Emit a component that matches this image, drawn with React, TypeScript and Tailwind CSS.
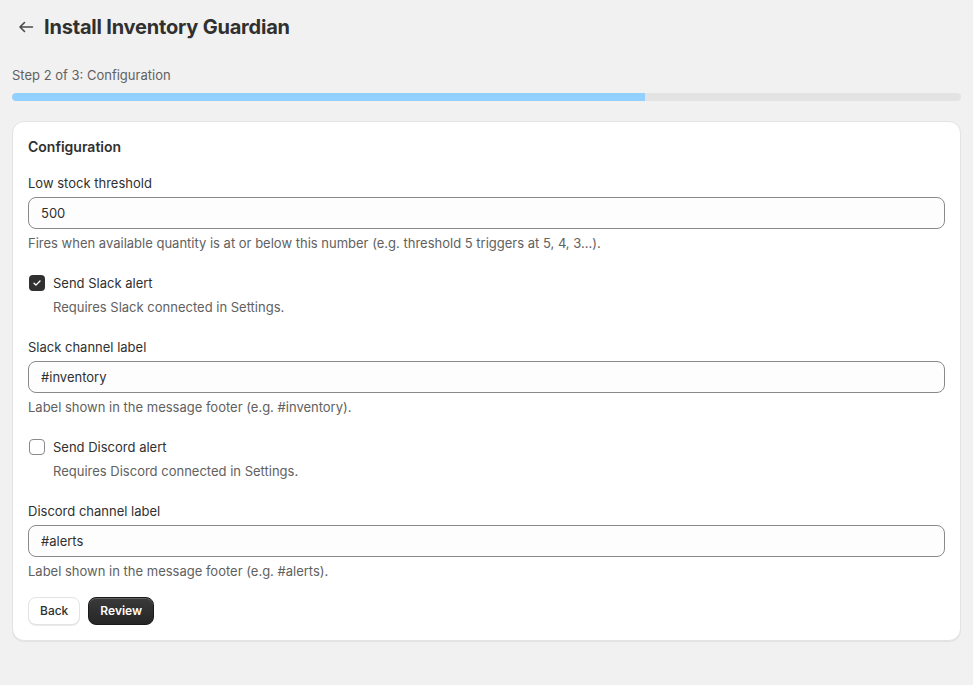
import { useState } from "react"

const Field = ({ label, value, help }: { label: string; value: string; help: string }) => {
	const [val, setVal] = useState(value)
	return (
		<div className="flex flex-col">
			<label className="text-[13px] leading-5 text-[#303030]">{label}</label>
			<input
				className="mt-1 h-8 w-full rounded-lg border border-[#8a8a8a] bg-[#fdfdfd] px-3 text-[13px] text-[#303030] outline-none"
				value={val}
				onChange={(e) => setVal(e.target.value)}
			/>
			<div className="mt-1 text-[13px] leading-5 text-[#616161]">{help}</div>
		</div>
	)
}

const Check = ({ label, help, checked }: { label: string; help: string; checked: boolean }) => {
	const [on, setOn] = useState(checked)
	return (
		<div className="flex flex-col pl-px">
			<button className="flex items-center gap-2 text-left" onClick={() => setOn(!on)}>
				<span
					className={
						on
							? "flex h-4 w-4 items-center justify-center rounded-[4px] bg-[#303030]"
							: "flex h-4 w-4 items-center justify-center rounded-[4px] border border-[#8a8a8a] bg-white"
					}
				>
					{on && (
						<svg viewBox="0 0 16 16" className="h-3 w-3" fill="none">
							<path d="M4 8.3l2.6 2.5L12 5.3" stroke="#fff" strokeWidth="1.8" strokeLinecap="round" strokeLinejoin="round" />
						</svg>
					)}
				</span>
				<span className="text-[13px] leading-5 text-[#303030]">{label}</span>
			</button>
			<div className="mt-1 pl-6 text-[13px] leading-5 text-[#616161]">{help}</div>
		</div>
	)
}

export default function App() {
	return (
		<div
			className="min-h-screen bg-[#f1f1f1] px-3 pt-[15px]"
			style={{ fontFamily: "Inter, 'Noto Sans', 'Liberation Sans', sans-serif" }}
		>
			<div className="flex items-center gap-2 pl-1">
				<svg viewBox="0 0 20 20" className="h-5 w-5" fill="none">
					<path d="M16.5 10H4m0 0l4.5-4.5M4 10l4.5 4.5" stroke="#4a4a4a" strokeWidth="1.6" strokeLinecap="round" strokeLinejoin="round" />
				</svg>
				<h1 className="text-xl leading-6 font-bold tracking-[-0.2px] text-[#303030]">Install Inventory Guardian</h1>
			</div>

			<div className="mt-[26px] text-[13px] leading-5 text-[#616161]">Step 2 of 3: Configuration</div>
			<div className="mt-2 h-2 w-full overflow-hidden rounded-full bg-[#e3e3e3]">
				<div className="h-full w-2/3 rounded-l-full bg-[#91d0ff]" />
			</div>

			<div className="mt-5 rounded-xl border border-[#e3e3e3] bg-white p-[15px] shadow-[0_1px_0_rgba(26,26,26,0.07)]">
				<h2 className="text-sm leading-5 font-semibold text-[#303030]">Configuration</h2>
				<div className="mt-4 flex flex-col gap-5">
					<Field
						label="Low stock threshold"
						value="500"
						help="Fires when available quantity is at or below this number (e.g. threshold 5 triggers at 5, 4, 3...)."
					/>
					<Check label="Send Slack alert" help="Requires Slack connected in Settings." checked />
					<Field label="Slack channel label" value="#inventory" help="Label shown in the message footer (e.g. #inventory)." />
					<Check label="Send Discord alert" help="Requires Discord connected in Settings." checked={false} />
					<Field label="Discord channel label" value="#alerts" help="Label shown in the message footer (e.g. #alerts)." />
				</div>
				<div className="mt-4 flex gap-2">
					<button className="h-7 rounded-lg border border-[#e3e3e3] bg-white px-[11px] text-xs font-medium text-[#303030] shadow-[0_1px_0_rgba(0,0,0,0.08)]">
						Back
					</button>
					<button className="h-7 rounded-lg border border-[#1a1a1a] bg-gradient-to-b from-[#3a3a3a] to-[#262626] px-[11px] text-xs font-semibold text-white shadow-[inset_0_1px_0_rgba(255,255,255,0.2)]">
						Review
					</button>
				</div>
			</div>
		</div>
	)
}
